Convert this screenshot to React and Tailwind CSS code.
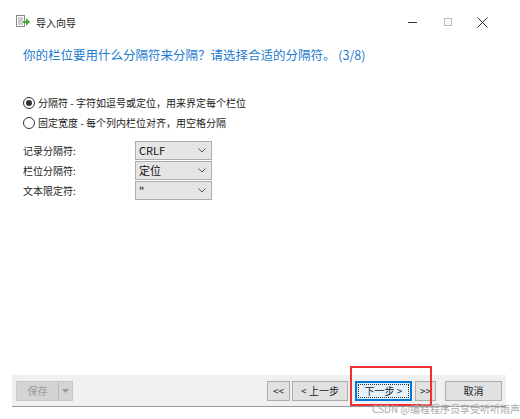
export default function App(){
const f={fontFamily:'"Noto Sans CJK SC","Microsoft YaHei",sans-serif'};
const Sel=({v})=>(<div className="w-[77px] h-[19px] bg-[#e5e5e5] border border-[#adadad] flex items-center justify-between pl-[3px] pr-[5px] text-[11px] text-[#111]"><span>{v}</span><svg width="8" height="5" viewBox="0 0 8 5"><path d="M0.5 0.5L4 4L7.5 0.5" fill="none" stroke="#555" strokeWidth="1"/></svg></div>);
const Btn=({c,children,w})=>(<div className={`h-[20px] bg-[#e1e1e1] border flex items-center justify-center text-[10px] ${c}`} style={{width:w}}>{children}</div>);
return(<div style={f} className="w-[520px] h-[419px] bg-white relative text-[#222] overflow-hidden">
<div className="h-[44px] flex items-center pl-[16px] pr-[20px]">
<svg width="14" height="14" viewBox="0 0 14 14"><rect x="0.5" y="0.5" width="8" height="11" fill="#fff" stroke="#888"/><path d="M2 3h5M2 5h5M2 7h5M2 9h5" stroke="#999"/><path d="M7 6h3V3l4 4-4 4V8H7z" fill="#3fae2a"/></svg>
<span className="ml-[6px] text-[10px]">导入向导</span>
<div className="ml-auto flex items-center text-[#333]">
<div className="w-[35px] flex justify-center"><div className="w-[9px] h-px bg-[#333]"/></div>
<div className="w-[35px] flex justify-center"><div className="w-[8px] h-[8px] border border-[#bbb]"/></div>
<div className="w-[35px] flex justify-center"><svg width="11" height="11" viewBox="0 0 11 11"><path d="M0.5 0.5l10 10M10.5 0.5l-10 10" stroke="#333"/></svg></div>
</div></div>
<div className="pl-[23px] pt-[1px] text-[12.5px] text-[#1d7cd0] leading-[20px]">你的栏位要用什么分隔符来分隔？请选择合适的分隔符。 (3/8)</div>
<div className="pl-[23px] mt-[30px] flex flex-col gap-[5px] text-[10px] leading-[15px]">
<div className="flex items-center gap-[3px]"><div className="w-[12px] h-[12px] rounded-full border border-[#333] flex items-center justify-center"><div className="w-[6px] h-[6px] rounded-full bg-[#333]"/></div>分隔符 - 字符如逗号或定位，用来界定每个栏位</div>
<div className="flex items-center gap-[3px]"><div className="w-[12px] h-[12px] rounded-full border border-[#333]"/>固定宽度 - 每个列内栏位对齐，用空格分隔</div>
</div>
<div className="pl-[23px] mt-[11px] flex flex-col gap-px text-[10px]">
{[["记录分隔符:","CRLF"],["栏位分隔符:","定位"],["文本限定符:","\""]].map(([l,v])=>(<div key={l} className="flex items-center"><span className="w-[112px]">{l}</span><Sel v={v}/></div>))}
</div>
<div className="absolute left-[12px] top-[375px] w-[494px] h-[32px] bg-[#f0f0f0] border-b border-[#999] flex items-center pl-[4px]">
<div className="flex h-[20px] bg-[#d4d4d4] border border-[#c8c8c8] text-[#999] text-[10px]"><div className="w-[42px] flex items-center justify-center border-r border-[#bbb]">保存</div><div className="w-[13px] flex items-center justify-center"><svg width="7" height="4"><path d="M0 0h7L3.5 4z" fill="#999"/></svg></div></div>
<div className="ml-auto flex items-center pr-[4px]">
<Btn c="border-[#adadad]" w={23}>&lt;&lt;</Btn>
<Btn c="border-[#adadad] ml-[2px]" w={56}>&lt; 上一步</Btn>
<div className="ml-[7px] w-[57px] h-[20px] border-2 border-[#0078d7] bg-[#e5f1fb] flex items-center justify-center"><div className="w-[51px] h-[14px] border border-dotted border-[#333] flex items-center justify-center text-[10px]">下一步 &gt;</div></div>
<Btn c="border-[#adadad] ml-[3px]" w={21}>&gt;&gt;</Btn>
<Btn c="border-[#adadad] ml-[9px]" w={57}>取消</Btn>
</div></div>
<div className="absolute left-[350px] top-[366px] w-[82px] h-[40px] border-2 border-[#f03030]"/>
<div className="absolute left-[372px] top-[403px] text-[10px] text-[#aaa] leading-[12px]">CSDN @编程程序员享受听听雨声</div>
</div>);}
